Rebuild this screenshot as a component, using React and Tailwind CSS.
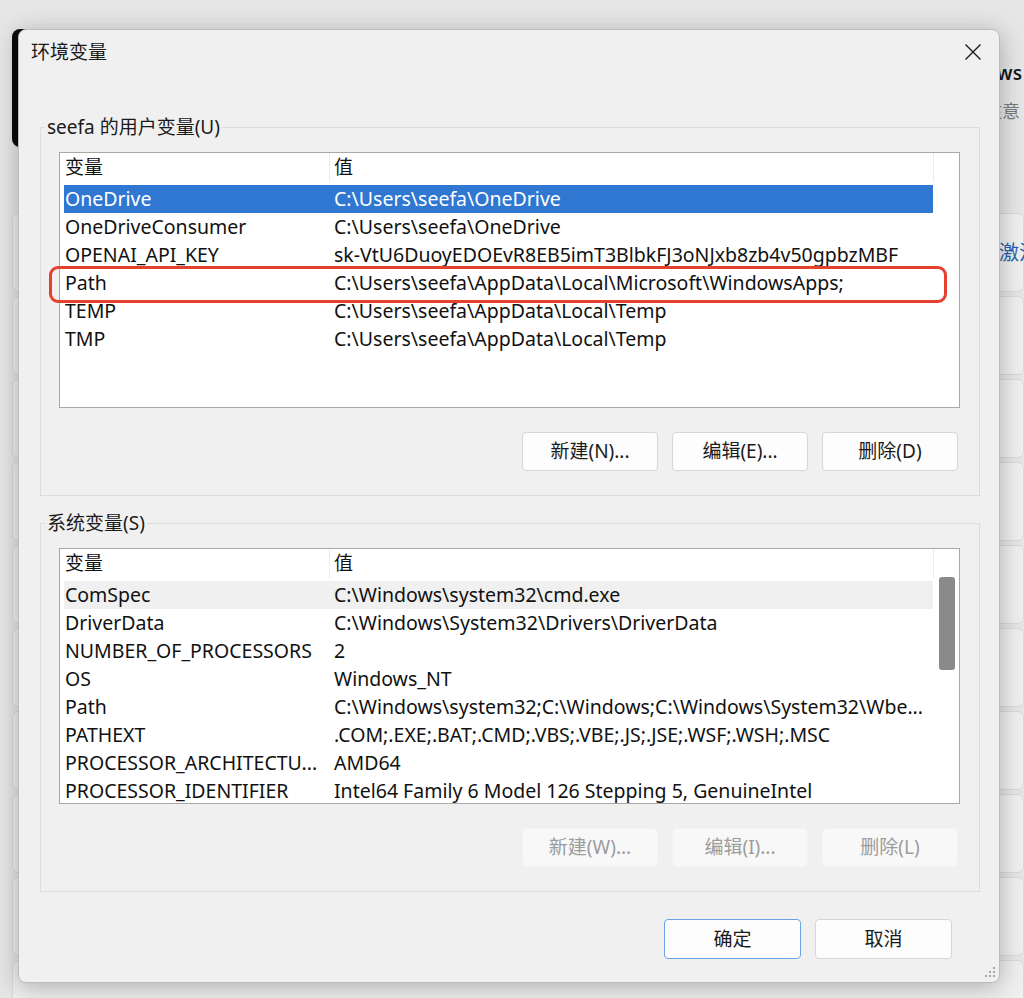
import React from 'react';

const font = "font-[family-name:'Noto_Sans','Noto_Sans_CJK_SC',sans-serif]";

const userVars = [
  { name: 'OneDrive', value: 'C:\\Users\\seefa\\OneDrive', selected: true },
  { name: 'OneDriveConsumer', value: 'C:\\Users\\seefa\\OneDrive' },
  { name: 'OPENAI_API_KEY', value: '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' },
  { name: 'Path', value: 'C:\\Users\\seefa\\AppData\\Local\\Microsoft\\WindowsApps;' },
  { name: 'TEMP', value: 'C:\\Users\\seefa\\AppData\\Local\\Temp' },
  { name: 'TMP', value: 'C:\\Users\\seefa\\AppData\\Local\\Temp' },
];

const sysVars = [
  { name: 'ComSpec', value: 'C:\\Windows\\system32\\cmd.exe', hover: true },
  { name: 'DriverData', value: 'C:\\Windows\\System32\\Drivers\\DriverData' },
  { name: 'NUMBER_OF_PROCESSORS', value: '2' },
  { name: 'OS', value: 'Windows_NT' },
  { name: 'Path', value: 'C:\\Windows\\system32;C:\\Windows;C:\\Windows\\System32\\Wbe...' },
  { name: 'PATHEXT', value: '.COM;.EXE;.BAT;.CMD;.VBS;.VBE;.JS;.JSE;.WSF;.WSH;.MSC' },
  { name: 'PROCESSOR_ARCHITECTU...', value: 'AMD64' },
  { name: 'PROCESSOR_IDENTIFIER', value: 'Intel64 Family 6 Model 126 Stepping 5, GenuineIntel' },
];

const Row = ({ name, value, selected, hover }) => (
  <div
    className={`flex h-[28px] items-center whitespace-nowrap text-[19.5px] ${
      selected ? 'bg-[#2f77d1] text-white' : hover ? 'bg-[#f0f0f0] text-[#111]' : 'text-[#111]'
    }`}
  >
    <span className="w-[270px] shrink-0 pl-[1px]">{name}</span>
    <span>{value}</span>
  </div>
);

const VarList = ({ rows, scroll }) => (
  <div className="flex h-[256px] overflow-hidden border border-[#a8a8a8] bg-white">
    <div className="flex w-[874px] shrink-0 flex-col">
      {/* header */}
      <div className="flex h-[29px] shrink-0 items-center border-r border-[#ececec] text-[19px] text-[#111]">
        <span className="flex h-full w-[270px] items-center border-r border-[#ececec] pl-[5px]">变量</span>
        <span className="pl-[4px]">值</span>
      </div>
      <div className="mt-[3px] pl-[4px] pr-[1px]">
        {rows.map((r) => (
          <Row key={r.name} {...r} />
        ))}
      </div>
    </div>
    {scroll && (
      <div className="flex-1 pl-[5px] pt-[28px]">
        <div className="h-[93px] w-[16px] rounded-[3px] bg-[#8a8a8a]" />
      </div>
    )}
  </div>
);

const Btn = ({ children, disabled, primary, wide }) => (
  <div
    className={`flex items-center justify-center rounded-[4px] border text-[19px] ${
      wide ? 'h-[40px] w-[137px]' : 'h-[39px] w-[136px]'
    } ${
      disabled
        ? 'border-[#f3f3f3] bg-[#f8f8f8] text-[#9c9c9c]'
        : primary
        ? 'border-[#6aa3e4] bg-[#fdfdfd] text-[#1a1a1a]'
        : 'border-[#d6d6d6] bg-[#fdfdfd] text-[#1a1a1a]'
    }`}
  >
    {children}
  </div>
);

const Group = ({ label, rows, scroll, buttons, disabled, className }) => (
  <fieldset className={`ml-[21px] mr-[19px] border border-[#dcdcdc] pb-[24px] ${className}`}>
    <legend className="ml-[4px] px-[2px] text-[19px] leading-[24px] text-[#1a1a1a]">{label}</legend>
    <div className="mt-[13px] pl-[18px] pr-[19px]">
      <VarList rows={rows} scroll={scroll} />
      <div className="mt-[24px] flex justify-end gap-[14px] pr-[2px]">
        {buttons.map((b) => (
          <Btn key={b} disabled={disabled}>
            {b}
          </Btn>
        ))}
      </div>
    </div>
  </fieldset>
);

const BgCard = ({ children }) => (
  <div className="flex h-[79px] shrink-0 items-center rounded-[6px] border border-[#d9d9d9] bg-[#efefef]">
    {children}
  </div>
);

export default function App() {
  return (
    <div className={`relative h-[998px] w-[1024px] overflow-hidden bg-[#e6e6e6] ${font}`}>
      {/* settings window behind */}
      <div className="flex w-[1024px] flex-col gap-[4px] pl-[12px] pt-[29px]">
        <div className="flex h-[180px] shrink-0 items-start justify-between">
          <div className="h-[118px] w-[220px] rounded-l-[8px] bg-[#0b0b0b]" />
          <div className="mt-[30px] flex flex-col items-end gap-[10px] whitespace-nowrap pr-[2px]">
            <span className="text-[19px] font-semibold text-[#1a1a1a]">Windows</span>
            <span className="pr-[2px] text-[18px] text-[#7a7a7a]">请注意</span>
          </div>
        </div>
        {Array.from({ length: 10 }).map((_, i) => (
          <BgCard key={i}>
            {i === 0 && <span className="ml-[986px] whitespace-nowrap text-[20px] text-[#2a5fb0]">激活</span>}
          </BgCard>
        ))}
      </div>

      {/* dialog */}
      <div className="absolute left-[18px] top-[29px] flex h-[954px] w-[982px] flex-col rounded-[8px] border border-[#bdbdbd] bg-[#f0f0f0] shadow-[0_4px_24px_rgba(0,0,0,0.28)]">
        <div className="flex h-[43px] shrink-0 items-center justify-between pl-[12px] pr-[17px] pt-[1px]">
          <span className="text-[19px] text-[#1a1a1a]">环境变量</span>
          <svg width="18" height="18" viewBox="0 0 18 18" className="text-[#1a1a1a]">
            <path d="M1.5 1.5 L16.5 16.5 M16.5 1.5 L1.5 16.5" stroke="currentColor" strokeWidth="1.4" fill="none" />
          </svg>
        </div>

        <Group
          className="mt-[42px]"
          label="seefa 的用户变量(U)"
          rows={userVars}
          buttons={['新建(N)...', '编辑(E)...', '删除(D)']}
        />
        <Group
          className="mt-[15px]"
          label="系统变量(S)"
          rows={sysVars}
          scroll
          disabled
          buttons={['新建(W)...', '编辑(I)...', '删除(L)']}
        />

        <div className="mt-[27px] flex justify-end gap-[14px] pr-[47px]">
          <Btn wide primary>确定</Btn>
          <Btn wide>取消</Btn>
        </div>

        {/* resize grip */}
        <svg width="12" height="12" viewBox="0 0 12 12" className="absolute bottom-[3px] right-[3px] text-[#a6a6a6]">
          <rect x="9" y="0" width="2" height="2" fill="currentColor" />
          <rect x="5" y="4" width="2" height="2" fill="currentColor" />
          <rect x="9" y="4" width="2" height="2" fill="currentColor" />
          <rect x="1" y="8" width="2" height="2" fill="currentColor" />
          <rect x="5" y="8" width="2" height="2" fill="currentColor" />
          <rect x="9" y="8" width="2" height="2" fill="currentColor" />
        </svg>

        {/* red annotation box around Path */}
        <div className="absolute left-[30px] top-[236px] h-[37px] w-[898px] rounded-[9px] border-[3px] border-[#e5412d]" />
      </div>
    </div>
  );
}
